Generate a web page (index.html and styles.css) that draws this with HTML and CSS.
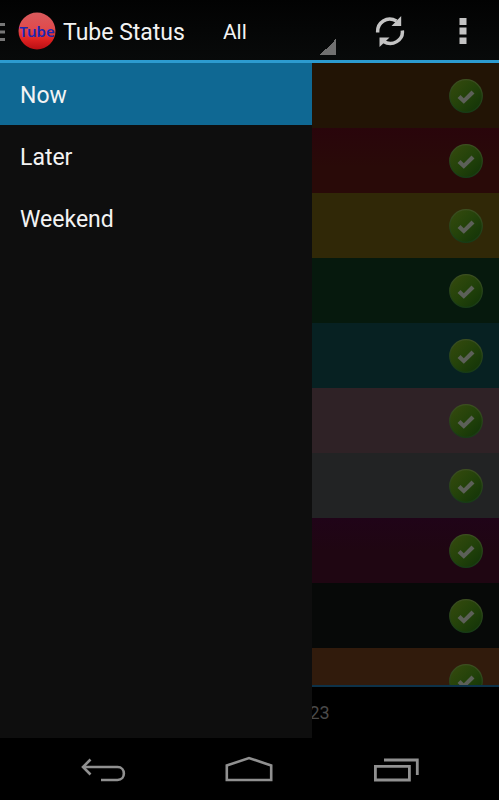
FILE: index.html
```html
<!DOCTYPE html>
<html lang="en">
<head>
    <meta charset="UTF-8">
    <meta name="viewport" content="width=device-width, initial-scale=1.0">
    <title>Tube Status</title>
    <link rel="stylesheet" href="styles.css">
</head>
<body>
    <!-- shared tick icon -->
    <svg class="defs" width="0" height="0" aria-hidden="true">
        <defs>
            <linearGradient id="tickFill" x1="0.1" y1="0.1" x2="0.9" y2="0.9">
                <stop offset="0" stop-color="#33490d"/>
                <stop offset="0.5" stop-color="#23420a"/>
                <stop offset="1" stop-color="#143508"/>
            </linearGradient>
            <linearGradient id="tickRim" x1="0" y1="0" x2="0" y2="1">
                <stop offset="0" stop-color="#3c4f20"/>
                <stop offset="1" stop-color="#173b16"/>
            </linearGradient>
        </defs>
        <symbol id="tick" viewBox="0 0 34 34">
            <circle cx="17" cy="17" r="16.3" fill="url(#tickFill)" stroke="url(#tickRim)" stroke-width="1.2"/>
            <path d="M8.5 19 L11.5 16 L14.8 19.200 L22.5 11.500 L25.5 14.500 L14.8 24.800 Z" fill="#5c6058"/>
        </symbol>
    </svg>

    <div class="screen">
        <header class="action-bar">
            <button class="menu-button" type="button" aria-label="Menu">
                <svg width="18" height="20" viewBox="0 0 18 20">
                    <path d="M0 1h5v3H0zM0 8.500h5v3H0zM0 16h5v3H0z" fill="#777"/>
                </svg>
            </button>
            <svg class="logo" width="38" height="38" viewBox="0 0 38 38" role="img" aria-label="Tube">
                <defs>
                    <linearGradient id="ball" x1="0" y1="0" x2="0" y2="1">
                        <stop offset="0" stop-color="#d95a5c"/>
                        <stop offset="0.45" stop-color="#e04a4c"/>
                        <stop offset="0.75" stop-color="#dc2020"/>
                        <stop offset="1" stop-color="#b80f14"/>
                    </linearGradient>
                </defs>
                <circle cx="19" cy="19" r="18.500" fill="url(#ball)"/>
                <text class="logo-text" x="19" y="25" text-anchor="middle">Tube</text>
            </svg>
            <h1 class="title">Tube Status</h1>
            <select class="filter" aria-label="Lines">
                <option>All</option>
            </select>
            <button class="action refresh" type="button" aria-label="Refresh">
                <svg width="30" height="32" viewBox="0 0 30 32" fill="none" stroke="#c4c4c4" stroke-width="3.500">
                    <path d="M2.700 17.500C2 7.500 12 0.500 21.500 6"/>
                    <path d="M27.300 15.500C28.500 25 17.500 32 8.500 26.500"/>
                    <path d="M26.200 1v10H16.500z" fill="#c4c4c4" stroke="none"/>
                    <path d="M4.500 32V22.500H14.500z" fill="#c4c4c4" stroke="none"/>
                </svg>
            </button>
            <button class="action more" type="button" aria-label="More options">
                <svg width="8" height="28" viewBox="0 0 8 28">
                    <path d="M0.500 1h7v7h-7zM0.500 10.500h7v7h-7zM0.500 20.500h7v6.500h-7z" fill="#c4c4c4"/>
                </svg>
            </button>
        </header>

        <main class="content">
            <ul class="lines">
                <li class="line bakerloo"><svg class="tick"><use href="#tick"/></svg></li>
                <li class="line central"><svg class="tick"><use href="#tick"/></svg></li>
                <li class="line circle"><svg class="tick"><use href="#tick"/></svg></li>
                <li class="line district"><svg class="tick"><use href="#tick"/></svg></li>
                <li class="line dlr"><svg class="tick"><use href="#tick"/></svg></li>
                <li class="line hammersmith"><svg class="tick"><use href="#tick"/></svg></li>
                <li class="line jubilee"><svg class="tick"><use href="#tick"/></svg></li>
                <li class="line metropolitan"><svg class="tick"><use href="#tick"/></svg></li>
                <li class="line northern"><svg class="tick"><use href="#tick"/></svg></li>
                <li class="line overground"><svg class="tick"><use href="#tick"/></svg></li>
            </ul>
            <div class="updated">23</div>

            <!-- drawer lies over the list -->
            <nav class="drawer">
                <a class="drawer-item selected" href="#now">Now</a>
                <a class="drawer-item" href="#later">Later</a>
                <a class="drawer-item" href="#weekend">Weekend</a>
            </nav>
        </main>

        <footer class="system-bar">
            <button class="system-button" type="button" aria-label="Back">
                <svg width="48" height="26" viewBox="0 0 48 26" fill="none" stroke="#909090" stroke-width="2.600">
                    <path d="M4 11H38.500C47 11 47 24 38.500 24H22"/>
                    <path d="M11.500 3.500L4 11L11.500 18.500"/>
                </svg>
            </button>
            <button class="system-button" type="button" aria-label="Home">
                <svg width="48" height="26" viewBox="0 0 48 26" fill="none" stroke="#909090" stroke-width="2.600">
                    <path d="M1.800 24V9.500L24 2L46.200 9.500V24Z"/>
                </svg>
            </button>
            <button class="system-button" type="button" aria-label="Recent apps">
                <svg width="48" height="26" viewBox="0 0 48 26" fill="none" stroke="#909090" stroke-width="2.800">
                    <path d="M3.400 10.400H37.400V24H3.400Z"/>
                    <path d="M12 4H45.300V19"/>
                </svg>
            </button>
        </footer>
    </div>
</body>
</html>
```
FILE: styles.css
```css
* {
    box-sizing: border-box;
}
body {
    margin: 0;
    background: #000;
    color: #f3f3f3;
    font-family: Roboto, "Liberation Sans", sans-serif;
}
button {
    border: 0;
    padding: 0;
    background: none;
    cursor: pointer;
}
svg { display: block; }
.defs { position: absolute; }

.screen {
    display: flex;
    flex-direction: column;
    height: 100vh;
}

/* top bar */
.action-bar {
    display: flex;
    align-items: center;
    flex: none;
    height: 63px;
    background: linear-gradient(#020202, #080a0a);
    border-bottom: 3px solid #2c9bd0;
}
.menu-button { margin-top: 4px; }
.logo { flex: none; margin-top: 2px; }
.logo-text {
    font-family: "Noto Sans", sans-serif;
    font-size: 15px;
    font-weight: 600;
    fill: #1c26b0;
}
.title {
    margin: 6px 0 0 7px;
    font-size: 23px;
    font-weight: 400;
    line-height: 32px;
    white-space: nowrap;
}
.filter {
    align-self: stretch;
    width: 121px;
    margin: 8px 0 5px 30px;
    padding: 0 24px 0 8px;
    border: 0;
    appearance: none;
    background: linear-gradient(135deg, transparent 50%, #707070 50%) right bottom / 16px 16px no-repeat;
    color: #f3f3f3;
    font-family: inherit;
    font-size: 21px;
}
.action {
    display: flex;
    align-items: center;
    justify-content: center;
    height: 60px;
    padding-top: 2px;
}
.refresh { width: 74px; margin-left: auto; }
.more { width: 72px; }

/* line list, dimmed behind the drawer */
.content {
    position: relative;
    display: flex;
    flex-direction: column;
    flex: 1;
    min-height: 0;
}
.lines {
    flex: 1;
    min-height: 0;
    margin: 0;
    padding: 0;
    overflow: hidden;
    list-style: none;
}
.line {
    display: flex;
    align-items: center;
    justify-content: flex-end;
    height: 65px;
    padding-right: 16px;
}
.tick { width: 34px; height: 34px; }
.bakerloo { background: #221405; }
.central { background: linear-gradient(#29050b, #290a08 60%); }
.circle { background: #302807; }
.district { background: #06190d; }
.dlr { background: #072122; }
.hammersmith { background: #2f2226; }
.jubilee { background: #222324; }
.metropolitan { background: linear-gradient(#200418, #1f0612 50%); }
.northern { background: #070908; }
.overground { background: #311b0c; }

.updated {
    flex: none;
    height: 53px;
    padding-left: 62%;
    border-top: 2px solid #0d3249;
    color: #4a4a4a;
    font-size: 18px;
    line-height: 51px;
}

.drawer {
    position: absolute;
    top: 0;
    bottom: 0;
    left: 0;
    width: 62.5%;
    background: #0e0e0e;
}
.drawer-item {
    display: block;
    padding: 4px 0 0 20px;
    color: #f3f3f3;
    font-size: 23px;
    line-height: 58px;
    text-decoration: none;
}
.selected { background: #0f6893; }

/* bottom bar */
.system-bar {
    display: flex;
    flex: none;
    height: 62px;
    padding: 0 30px;
    background: #000;
}
.system-button {
    display: flex;
    flex: 1;
    align-items: center;
    justify-content: center;
}
```
